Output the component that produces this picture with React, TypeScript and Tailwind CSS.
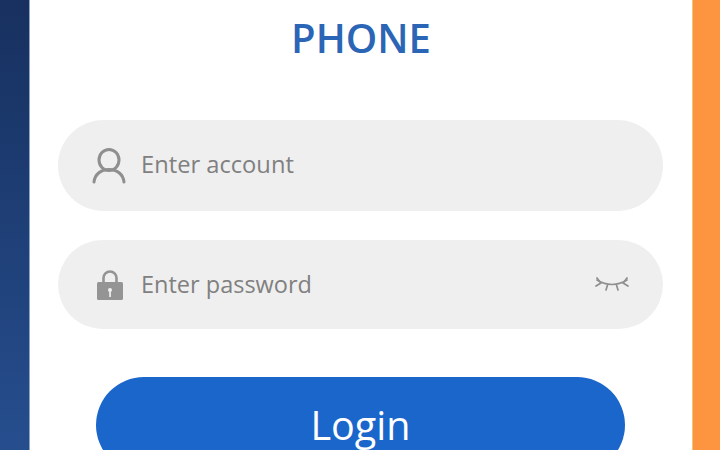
function UserIcon() {
  return (
    <svg width="36" height="38" viewBox="0 0 36 38" fill="none" stroke="#8f8f8f" strokeWidth="3" strokeLinecap="round" className="shrink-0">
      <ellipse cx="18" cy="13" rx="10" ry="10.5" />
      <path d="M3 35c1-8 7-12.5 15-12.5S32 27 33 35" />
    </svg>
  );
}

function LockIcon() {
  return (
    <svg width="28" height="32" viewBox="0 0 28 32" className="shrink-0">
      <path d="M7.5 15V9a6.5 6.5 0 0 1 13 0v6" fill="none" stroke="#949494" strokeWidth="2.6" />
      <rect x="1" y="13" width="26" height="18" rx="1.5" fill="#949494" />
      <circle cx="14" cy="21" r="2" fill="#efefef" />
      <rect x="13.2" y="21" width="1.7" height="7" fill="#efefef" />
    </svg>
  );
}

function EyeClosedIcon() {
  return (
    <svg width="34" height="20" viewBox="0 0 34 20" fill="none" stroke="#8f8f8f" strokeWidth="1.7" strokeLinecap="round" className="shrink-0">
      <path d="M2 5q15 9 30 0" />
      <path d="M2 3l3 4M32 3l-3 4M1 11l5-3M33 11l-5-3M11 15l1.5-5M23 15l-1.5-5" />
    </svg>
  );
}

export default function App() {
  return (
    <div className="flex h-[450px] w-[720px] overflow-hidden bg-white font-['Open_Sans',sans-serif]">
      <div className="w-[30px] shrink-0 border-r border-[#8fa3c4] bg-gradient-to-b from-[#17305f] to-[#264e8e]" />

      <div className="flex flex-1 flex-col items-center">
        <h1 className="mt-[13px] text-[40px] leading-[50px] font-semibold text-[#2b65b5]">PHONE</h1>

        <div className="ml-[-1px] mt-[57px] flex h-[91px] w-[605px] shrink-0 items-center rounded-[46px] bg-[#efefef] pr-[34px] pl-[33px]">
          <UserIcon />
          <span className="ml-[14px] pb-[2px] text-[23.7px] text-[#808080]">Enter account</span>
        </div>

        <div className="ml-[-1px] mt-[29px] flex h-[89px] w-[605px] shrink-0 items-center rounded-[45px] bg-[#efefef] pr-[34px] pl-[38px]">
          <LockIcon />
          <span className="ml-[17px] flex-1 pt-[1px] text-[23.5px] text-[#808080]">Enter password</span>
          <EyeClosedIcon />
        </div>

        <button className="ml-[-1px] mt-[48px] flex h-[96px] w-[529px] shrink-0 justify-center rounded-[48px] bg-[#1a66cb] pt-[24px] text-[39.5px] leading-[48px] text-white">
          Login
        </button>
      </div>

      <div className="w-[28px] shrink-0 border-l border-[#f3c47f] bg-[#fd943f]" />
    </div>
  );
}
